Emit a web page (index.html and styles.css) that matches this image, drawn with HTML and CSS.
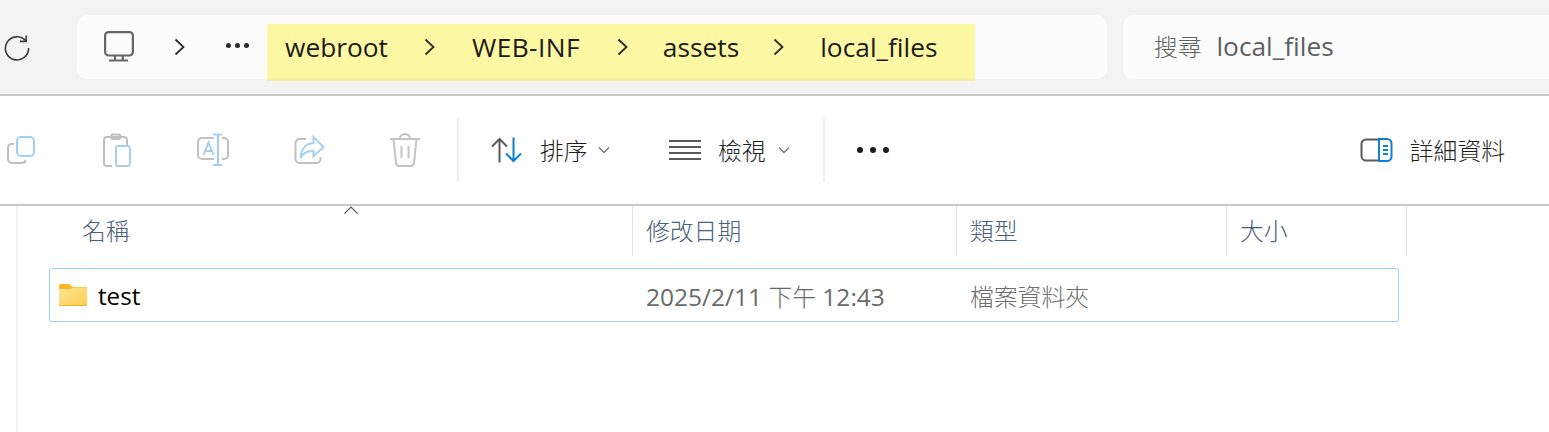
FILE: index.html
```html
<!DOCTYPE html>
<html lang="zh-Hant">
<head>
<meta charset="utf-8">
<title>local_files</title>
<link rel="stylesheet" href="styles.css">
</head>
<body>
<div class="window">
  <header class="topbar">
    <svg class="refresh" width="26" height="26" viewBox="0 0 26 26" fill="none" stroke="#3c3c3c" stroke-width="1.6"><path d="M21.600 5.600A11.600 11.600 0 1 0 24.600 13"/><path d="M15.800 6.400h6.400V0.600"/></svg>
    <nav class="address">
      <svg class="pc" width="32" height="32" viewBox="0 0 32 32" fill="none" stroke="#666" stroke-width="2.200"><rect x="1.100" y="1.100" width="27.800" height="23.400" rx="3.500"/><path d="M11 25v4M18.700 25v4M5 29.500h19"/></svg>
      <svg class="chev chev-first" width="11" height="18" viewBox="0 0 11 18" fill="none" stroke="#2b2b2b" stroke-width="1.800"><path d="M1.500 1.500 9.500 9 1.500 16.500"/></svg>
      <span class="crumb-dots"><i></i><i></i><i></i></span>
      <div class="highlight">
        <span class="crumb">webroot</span>
        <svg class="chev" width="11" height="18" viewBox="0 0 11 18" fill="none" stroke="#2b2b2b" stroke-width="1.800"><path d="M1.500 1.500 9.500 9 1.500 16.500"/></svg>
        <span class="crumb crumb-inf">WEB-INF</span>
        <svg class="chev" width="11" height="18" viewBox="0 0 11 18" fill="none" stroke="#2b2b2b" stroke-width="1.800"><path d="M1.500 1.500 9.500 9 1.500 16.500"/></svg>
        <span class="crumb crumb-assets">assets</span>
        <svg class="chev" width="11" height="18" viewBox="0 0 11 18" fill="none" stroke="#2b2b2b" stroke-width="1.800"><path d="M1.500 1.500 9.500 9 1.500 16.500"/></svg>
        <span class="crumb">local_files</span>
      </div>
    </nav>
    <div class="search"><span class="cjk">搜尋</span> <span class="search-term">local_files</span></div>
  </header>

  <section class="toolbar">
    <div class="tool-icons">
      <svg class="first-icon" width="30" height="30" viewBox="0 0 30 30" fill="none" stroke-width="2"><path d="M7 9H4.500A3.500 3.500 0 0 0 1 12.500v11A4 4 0 0 0 5 28h10a3.500 3.500 0 0 0 3.500-3" stroke="#c0c0c0"/><rect x="10" y="2" width="17" height="19" rx="4" stroke="#a3d0f2"/></svg>
      <svg width="30" height="34" viewBox="0 0 30 34" fill="none" stroke-width="2"><path d="M10 33H5a3 3 0 0 1-3-3V7a3 3 0 0 1 3-3h17a3 3 0 0 1 3 3v5" stroke="#c0c0c0"/><rect x="9" y="1.500" width="9.500" height="4.500" rx="2.200" stroke="#c0c0c0"/><rect x="14" y="13" width="14" height="20" rx="2.500" stroke="#a3d0f2"/></svg>
      <svg width="34" height="34" viewBox="0 0 34 34" fill="none" stroke-width="2"><path d="M18 5H6a4 4 0 0 0-4 4v13a4 4 0 0 0 4 4h12M26 5h2a4 4 0 0 1 4 4v13a4 4 0 0 1-4 4h-2" stroke="#c0c0c0"/><path d="M22 1.500V32M17 1.500h9M17 32h9M7.500 22 12.500 9.500 17.500 22M9.200 18h6.600" stroke="#a3d0f2"/></svg>
      <svg width="32" height="30" viewBox="0 0 32 30" fill="none" stroke-width="2"><path d="M12 4H5.500A4 4 0 0 0 1.500 8v16a4 4 0 0 0 4 4h17a4 4 0 0 0 4-4v-2" stroke="#c0c0c0"/><path d="M19.500 2 29.500 12 19.500 21.500V16C13 15.500 9 18 6.500 23 7 14 12 8.500 19.500 8Z" stroke="#a3d0f2"/></svg>
      <svg class="last-icon" width="32" height="34" viewBox="0 0 32 34" fill="none" stroke="#c4c4c4" stroke-width="2"><path d="M1 6h30M11 5.500a5 4.500 0 0 1 10 0M4.500 6l2.500 24a3.500 3.500 0 0 0 3.500 3h11a3.500 3.500 0 0 0 3.500-3l2.500-24M12.500 13v12M19.500 13v12"/></svg>
    </div>
    <div class="sep"></div>
    <div class="tool-btn sort">
      <svg width="33" height="26" viewBox="0 0 33 26" fill="none" stroke-width="2"><path d="M8.500 25.500V2M1 9.500 8.500 2 16 9.500" stroke="#5a5a5a"/><path d="M22.500 0.500V24M15 16.500 22.500 24 30 16.500" stroke="#0f7fd6"/></svg>
      <span class="tool-label">排序</span>
      <svg class="caret" width="12" height="8" viewBox="0 0 12 8" fill="none" stroke="#777" stroke-width="1.400"><path d="M1 1.500 6 6.500 11 1.500"/></svg>
    </div>
    <div class="tool-btn view">
      <svg width="32" height="22" viewBox="0 0 32 22" fill="none" stroke="#5a5a5a" stroke-width="2"><path d="M0 2h32M0 8h32M0 14h32M0 20h32"/></svg>
      <span class="tool-label">檢視</span>
      <svg class="caret" width="12" height="8" viewBox="0 0 12 8" fill="none" stroke="#777" stroke-width="1.400"><path d="M1 1.500 6 6.500 11 1.500"/></svg>
    </div>
    <div class="sep"></div>
    <span class="more"><i></i><i></i><i></i></span>
    <div class="details">
      <svg width="33" height="24" viewBox="0 0 33 24" fill="none" stroke-width="2"><path d="M19 1.500H6A4.500 4.500 0 0 0 1.500 6v12A4.500 4.500 0 0 0 6 22.500h13" stroke="#5a5a5a"/><path d="M19 1H27A4.500 4.500 0 0 1 31.500 5.500v13A4.500 4.500 0 0 1 27 23H19ZM23 8h5M23 12h5M23 16h5" stroke="#0f7fd6"/></svg>
      <span class="tool-label">詳細資料</span>
    </div>
  </section>

  <main class="files">
    <div class="col-head">
      <div class="col col-name">名稱</div>
      <div class="col col-date">修改日期</div>
      <div class="col col-type">類型</div>
      <div class="col col-size">大小</div>
      <svg class="sort-caret" width="16" height="8" viewBox="0 0 16 8" fill="none" stroke="#555" stroke-width="1.100"><path d="M1.500 7.500 8 1 14.500 7.500"/></svg>
    </div>
    <div class="row">
      <div class="cell-name">
        <svg width="28" height="22" viewBox="0 0 28 22"><defs><linearGradient id="fold" x1="0" y1="0" x2="1" y2="1"><stop offset="0" stop-color="#fde79a"/><stop offset="1" stop-color="#fdcb4c"/></linearGradient></defs><path d="M0 1.500A1.500 1.500 0 0 1 1.500 0H10l3.500 3H28V8H0Z" fill="#fdb61f"/><path d="M0 5H11.500L14 3.500H28V21.500H0Z" fill="url(#fold)"/><path d="M0 21h28v1H0Z" fill="#f0b030"/></svg>
        <span class="name">test</span>
      </div>
      <div class="cell-date">2025/2/11 <span class="cjk">下午</span> 12:43</div>
      <div class="cell-type">檔案資料夾</div>
    </div>
  </main>
</div>
</body>
</html>
```
FILE: styles.css
```css
* { box-sizing: border-box; }
html, body { margin: 0; height: 100%; overflow: hidden; background: #fff; }
body { font-family: "Open Sans", "Noto Sans CJK TC", sans-serif; font-size: 24px; color: #1b1b1b; }
.window { height: 432px; width: 1549px; overflow: hidden; display: flex; flex-direction: column; }
svg { display: block; flex: none; }
.cjk { font-size: 23.8px; font-weight: 300; }

.topbar { height: 96px; flex: none; background: #f3f3f3; border-bottom: 2px solid #c8c8c8; display: flex; align-items: flex-start; padding-top: 15px; }
.refresh { margin: 20px 0 0 4px; }
.address { margin-left: 47px; width: 1030px; height: 64px; background: #fcfcfc; border-radius: 10px; display: flex; align-items: center; }
.pc { margin-left: 27px; }
.chev-first { margin-left: 38px; }
.crumb-dots { display: flex; gap: 4px; margin: 0 0 4px 41px; }
.crumb-dots i { width: 5px; height: 5px; border-radius: 50%; background: #2b2b2b; display: block; }
.highlight { align-self: flex-start; margin: 9px 0 0 18px; width: 708px; height: 57px; background: #fdf8a3; box-shadow: inset 0 -3px 0 #f4eea0; display: flex; align-items: center; padding: 0 0 11px 18px; font-size: 26.3px; }
.highlight .chev { margin: 0 36px; }
.crumb-inf { letter-spacing: 0.4px; margin: 0 1px; }
.crumb-assets { margin: 0 -2px 0 -1px; }
.search { margin-left: 16px; flex: 1; height: 64px; background: #fcfcfc; border-radius: 10px 0 0 10px; padding: 13px 0 0 31px; font-size: 26.3px; color: #5f5f5f; }
.search-term { margin-left: 8px; }

.toolbar { height: 110px; flex: none; background: #fff; border-bottom: 2px solid #c8c8c8; display: flex; align-items: center; }
.tool-icons { display: flex; align-items: center; width: 457px; padding-left: 7px; gap: 64px; }
.first-icon { margin-right: 1px; }
.last-icon { margin-left: -1px; }
.sep { width: 2px; height: 64px; background: #eeeeee; flex: none; }
.tool-btn { display: flex; align-items: center; }
.tool-label { font-size: 23.8px; font-weight: 300; color: #1f1f1f; padding-bottom: 2px; }
.sort { margin-left: 32px; width: 178px; }
.sort .tool-label { margin-left: 16px; }
.sort .caret { margin-left: 10px; }
.view { width: 154px; }
.view .tool-label { margin-left: 17px; }
.view .caret { margin-left: 12px; }
.more { display: flex; gap: 7px; margin-left: 32px; }
.more i { width: 6px; height: 6px; border-radius: 50%; background: #1b1b1b; display: block; }
.details { display: flex; align-items: center; margin-left: auto; margin-right: 44px; gap: 17px; }

.files { flex: 1; margin-left: 16px; border-left: 2px solid #f3f3f3; }
.col-head { position: relative; height: 50px; display: flex; color: #4c607a; font-size: 23.8px; font-weight: 300; }
.col { padding: 6px 0 0 13px; border-right: 1px solid #e5e5e5; }
.col-name { width: 615px; padding-left: 64px; }
.col-date { width: 324px; }
.col-type { width: 270px; }
.col-size { width: 180px; }
.sort-caret { position: absolute; left: 325px; top: 0; }
.row { margin: 12px 0 0 31px; width: 1350px; height: 54px; border: 1px solid #99d1f7; border-radius: 3px; display: flex; align-items: center; }
.cell-name { width: 596px; display: flex; align-items: center; padding-left: 9px; gap: 11px; }
.name { color: #000; font-size: 24.2px; }
.cell-date { width: 324px; color: #6a6a6a; font-size: 24.5px; }
.cell-type { color: #6e6e6e; font-size: 23.8px; font-weight: 300; }
```
